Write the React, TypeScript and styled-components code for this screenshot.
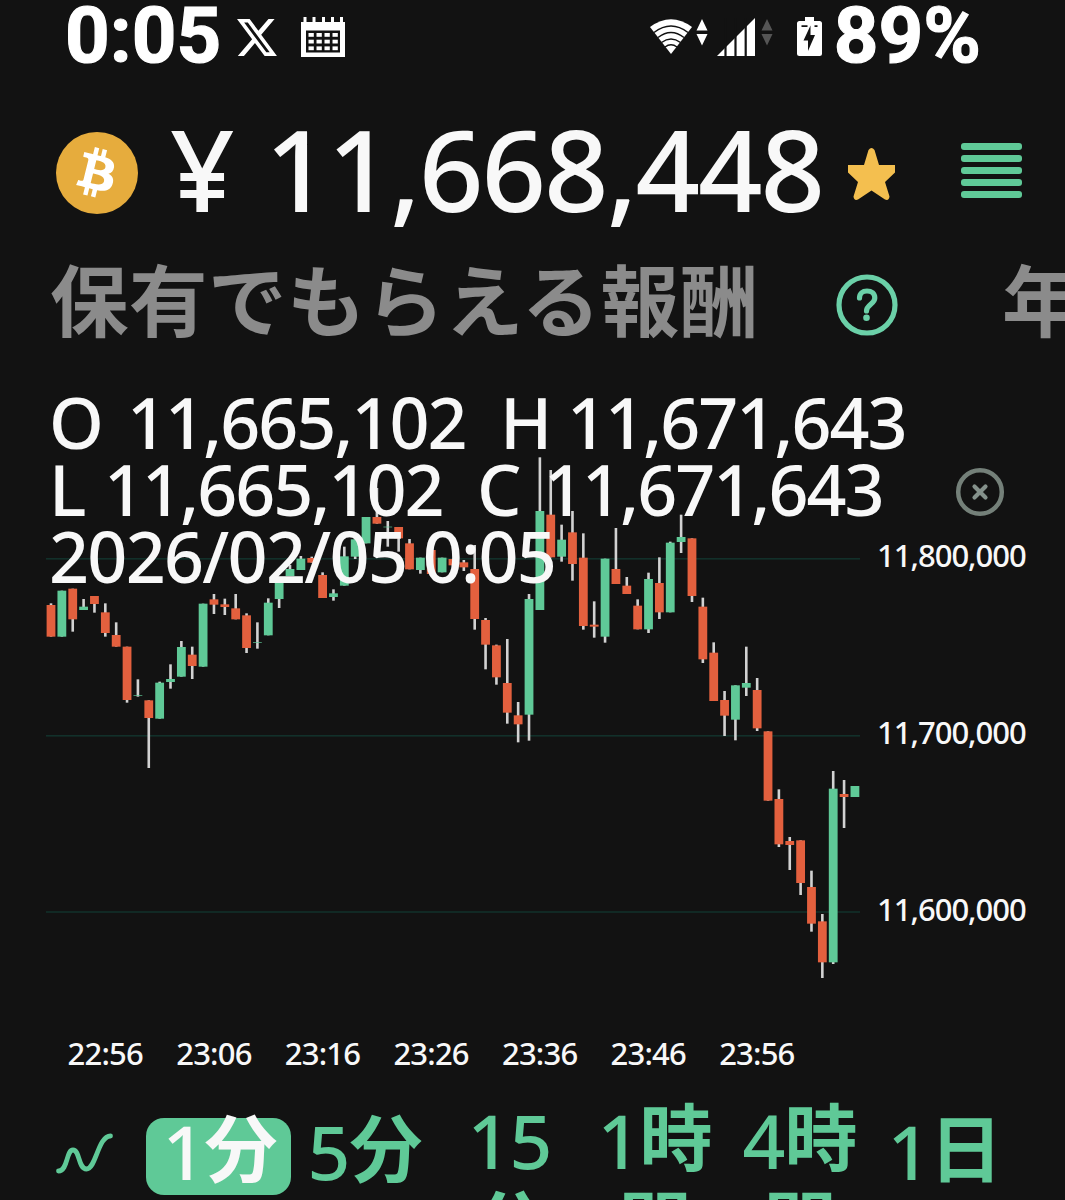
import React from "react";
import styled, { createGlobalStyle } from "styled-components";
import { FaBitcoin } from "react-icons/fa";

const color = {
  bg: "#121212",
  text: "#f8f8f8",
  green: "#5fc997",
  mint: "#6bd0a8",
  red: "#e3603e",
  wick: "#d2d2d2",
  grid: "#12302a",
  muted: "#8b8b8b",
  gold: "#e6ac3d",
  star: "#f4bf4f",
};

const GlobalStyle = createGlobalStyle`
  html, body { margin: 0; background: ${color.bg}; overflow: hidden; }
  * { box-sizing: border-box; }
`;

const Screen = styled.main`
  width: 1065px;
  height: 1200px;
  overflow: hidden;
  display: flex;
  flex-direction: column;
  background: ${color.bg};
  color: ${color.text};
  font-family: "Noto Sans", "Noto Sans CJK JP", sans-serif;
  font-weight: 500;
  white-space: nowrap;
`;

const StatusBar = styled.header`
  height: 72px;
  flex: none;
  display: flex;
  align-items: center;
  justify-content: space-between;
  padding: 0 84px 0 65px;
`;

const StatusGroup = styled.div`
  display: flex;
  align-items: center;
`;

const StatusText = styled.span<{ $ml?: number }>`
  margin-left: ${(p) => p.$ml ?? 0}px;
  color: #fff;
  font: 700 78px/72px Roboto, sans-serif;
  -webkit-text-stroke: 1.2px #fff;
`;

const Icon = styled.svg<{ $ml?: number; $mt?: number }>`
  display: block;
  flex: none;
  margin-left: ${(p) => p.$ml ?? 0}px;
  margin-top: ${(p) => p.$mt ?? 0}px;
`;

const PriceRow = styled.section`
  height: 112px;
  flex: none;
  margin-top: 40px;
  padding-left: 56px;
  display: flex;
  align-items: center;
`;

const Coin = styled.div`
  width: 82px;
  height: 82px;
  flex: none;
  margin-top: 10px;
  border-radius: 50%;
  background: radial-gradient(#fff 60%, ${color.gold} 61%);
  color: ${color.gold};
  svg { display: block; width: 82px; height: 82px; }
`;

const Price = styled.h1`
  width: 678px;
  flex: none;
  margin: 0 0 0 32px;
  font-size: 113px;
  line-height: 112px;
  font-weight: 500;
  letter-spacing: -2.05px;
  word-spacing: 5px;
`;

const Menu = styled.div`
  display: flex;
  flex-direction: column;
  justify-content: space-between;
  width: 61px;
  height: 55px;
  margin: 4px 0 0 66px;
`;

const MenuLine = styled.i`
  height: 7px;
  border-radius: 3px;
  background: ${color.green};
`;

const RewardRow = styled.section`
  height: 90px;
  flex: none;
  margin-top: 28px;
  padding-left: 50px;
  display: flex;
  align-items: center;
  color: ${color.muted};
  font: 700 78.5px/90px "Noto Sans CJK JP", sans-serif;
`;

const RewardLabel = styled.span`
  width: 786px;
  flex: none;
  letter-spacing: 0.5px;
`;

const RateLabel = styled.span`
  margin-left: 104px;
`;

const ChartSection = styled.section`
  position: relative;
  height: 632px;
  flex: none;
  margin-top: 38px;
  display: flex;
`;

const Plot = styled.svg`
  display: block;
  flex: none;
`;

const PriceAxis = styled.div`
  display: flex;
  flex-direction: column;
  padding-top: 87px;
  margin-left: -1px;
  font-size: 31px;
  line-height: 176.8px;
  letter-spacing: -1px;
`;

const Readout = styled.div`
  position: absolute;
  left: 49px;
  top: 9px;
  font-size: 70px;
  line-height: 67px;
`;

const ReadoutLine = styled.div<{ $ls?: number }>`
  display: flex;
  letter-spacing: ${(p) => p.$ls ?? -2}px;
`;

const Field = styled.span<{ $w: number }>`
  display: block;
  width: ${(p) => p.$w}px;
  flex: none;
`;

const Dismiss = styled.svg`
  position: absolute;
  left: 955px;
  top: 87px;
`;

const TimeAxis = styled.div`
  height: 40px;
  flex: none;
  margin-top: 21px;
  padding-left: 51px;
  display: flex;
  font-size: 31px;
  line-height: 40px;
  letter-spacing: -0.8px;
`;

const TimeLabel = styled.span`
  width: 108.6px;
  text-align: center;
`;

const Tabs = styled.nav`
  height: 127px;
  flex: none;
  padding-left: 56px;
  margin-top: 26px;
  display: flex;
  align-items: flex-start;
  color: ${color.green};
`;

const Tab = styled.button<{ $active?: boolean; $double?: boolean }>`
  width: 145px;
  height: ${(p) => (p.$double ? 164 : 77)}px;
  flex: none;
  display: flex;
  flex-direction: column;
  align-items: center;
  margin: ${(p) => (p.$double ? 0 : 19)}px 0 0;
  padding: 0;
  border: 0;
  border-radius: 18px;
  background: ${(p) => (p.$active ? color.green : "transparent")};
  color: ${(p) => (p.$active ? color.text : color.green)};
  font: 500 75px/82px "Noto Sans", "Noto Sans CJK JP", sans-serif;
  letter-spacing: -1px;
`;

const TabLine = styled.span<{ $up?: boolean }>`
  display: flex;
  height: 82px;
  padding-left: 2px;
  margin-top: ${(p) => (p.$up ? -8 : 0)}px;
`;

const Kanji = styled.span<{ $drop?: boolean }>`
  margin-top: ${(p) => (p.$drop ? 0 : -5)}px;
  font: 700 73px/79px "Noto Sans CJK JP", sans-serif;
`;

/* kind, body top, body bottom, wick top, wick bottom; three units per pixel */
type Candle = [0 | 1, number, number, number, number];
const candles: Candle[] = [
  [0, 675, 770, 670, 770], [1, 632, 770, 632, 770], [0, 626, 718, 626, 755], [1, 680, 690, 657, 690],
  [0, 648, 672, 648, 698], [0, 697, 759, 670, 770], [0, 765, 800, 727, 800], [0, 800, 960, 800, 968],
  [1, 946, 948, 898, 950], [0, 961, 1014, 961, 1164], [1, 908, 1016, 905, 1016], [1, 897, 906, 853, 926],
  [1, 801, 890, 783, 890], [0, 824, 858, 800, 897], [1, 671, 860, 671, 860], [0, 658, 674, 642, 702],
  [0, 673, 681, 656, 705], [0, 685, 718, 642, 718], [0, 706, 804, 700, 819], [1, 786, 788, 727, 806],
  [1, 668, 766, 655, 766], [1, 595, 657, 595, 684], [1, 567, 588, 555, 588], [1, 536, 570, 528, 570],
  [0, 534, 548, 530, 548], [0, 585, 654, 577, 654], [1, 640, 651, 628, 662], [1, 529, 617, 500, 617],
  [1, 478, 530, 478, 537], [1, 411, 490, 411, 490], [0, 411, 431, 324, 431], [1, 440, 442, 423, 500],
  [0, 441, 475, 441, 515], [0, 490, 568, 477, 568], [1, 533, 570, 533, 581], [0, 510, 582, 510, 582],
  [1, 533, 577, 533, 577], [0, 537, 556, 537, 556], [0, 547, 562, 540, 573], [0, 567, 717, 495, 749],
  [0, 720, 794, 714, 868], [0, 796, 892, 794, 914], [0, 909, 998, 777, 1031], [0, 1006, 1033, 966, 1087],
  [1, 657, 1004, 642, 1082], [1, 393, 690, 232, 690], [0, 404, 532, 270, 532], [1, 479, 530, 434, 545],
  [0, 457, 552, 393, 602], [0, 533, 738, 460, 749], [0, 734, 740, 664, 773], [1, 536, 770, 536, 788],
  [0, 567, 612, 444, 612], [0, 617, 642, 591, 642], [0, 677, 748, 658, 748], [1, 597, 748, 578, 759],
  [0, 609, 697, 532, 717], [1, 488, 697, 485, 697], [1, 471, 486, 404, 519], [0, 475, 648, 475, 666],
  [0, 680, 838, 653, 849], [0, 818, 963, 787, 963], [0, 960, 1007, 933, 1068], [1, 916, 1019, 916, 1081],
  [1, 909, 923, 800, 948], [0, 930, 1045, 894, 1053], [0, 1054, 1262, 1054, 1262], [0, 1257, 1393, 1228, 1401],
  [0, 1383, 1395, 1371, 1470], [0, 1381, 1509, 1381, 1545], [0, 1521, 1631, 1472, 1655], [0, 1624, 1747, 1602, 1794],
  [1, 1226, 1747, 1173, 1752], [0, 1242, 1251, 1200, 1344], [1, 1218, 1251, 1218, 1251],
];

const times = ["22:56", "23:06", "23:16", "23:26", "23:36", "23:46", "23:56"];
const levels = ["11,800,000", "11,700,000", "11,600,000"];

function Chart() {
  return (
    <Plot width="878" height="632" viewBox="0 0 878 632">
      {[178.8, 355.8, 532].map((y) => (
        <rect key={y} x="46" y={y - 0.8} width="814" height="1.6" fill={color.grid} />
      ))}
      {candles.map(([up, top, bottom, high, low], i) => {
        const x = 51 + i * 10.864;
        return (
          <g key={i}>
            <rect x={x - 1.3} y={high / 3} width="2.6" height={(low - high) / 3} fill={color.wick} />
            <rect x={x - 4.4} y={top / 3} width="8.8" height={(bottom - top) / 3} fill={up ? color.green : color.red} />
          </g>
        );
      })}
    </Plot>
  );
}

function XLogo() {
  return (
    <Icon $ml={16} $mt={2} width="40" height="37" viewBox="1.25 2.25 21.6 19.5" preserveAspectRatio="none" fill="#fff">
      <path d="M18.244 2.25h3.308l-7.227 8.26 8.502 11.24H16.17l-5.214-6.817L4.99 21.75H1.68l7.73-8.835L1.254 2.25H8.08l4.713 6.231zm-1.161 17.52h1.833L7.084 4.126H5.117z" />
    </Icon>
  );
}

function CalendarIcon() {
  return (
    <Icon $ml={24} $mt={2} width="44" height="40" viewBox="0 0 44 40">
      <path fill="#fff" d="M0 5h44v35H0z" />
      {[2.5, 11.5, 21, 30, 39].map((x) => (
        <rect key={x} x={x} y="0" width="3" height="6" fill="#fff" />
      ))}
      <path fill={color.bg} d="M5 13.5h34v22H5z" />
      {[0, 1, 2].map((r) =>
        [0, 1, 2, 3].map((c) => (
          <rect key={`${r}-${c}`} x={7.5 + c * 8} y={16 + r * 6.7} width="5.3" height="3.8" fill="#fff" />
        ))
      )}
    </Icon>
  );
}

function WifiIcon() {
  return (
    <Icon $mt={1} width="42" height="35" viewBox="0 0 42 35">
      <path fill="#fff" d="M0 8Q21 -7.5 42 8L21 35Z" />
      <g fill="none" stroke={color.bg} strokeWidth="1.5">
        <path d="M4 13.5Q21 .5 38 13.5M8 18.5Q21 8.5 34 18.5M11.5 23.5Q21 16.5 30.5 23.5M15 28Q21 23.5 27 28" />
      </g>
    </Icon>
  );
}

function Arrows({ fill, ml }: { fill: string; ml: number }) {
  return (
    <Icon $ml={ml} $mt={-7} width="12" height="27" viewBox="0 0 12 27" fill={fill}>
      <path d="M6 0l5.5 11.5H.5zM.5 15h11L6 26.5z" />
    </Icon>
  );
}

function SignalIcon() {
  return (
    <Icon $ml={9} $mt={1} width="38" height="38" viewBox="0 0 38 38">
      <path fill="#fff" d="M0 38L38 0v38z" />
      <path stroke={color.bg} strokeWidth="2.2" d="M8.5 0v38M18.5 0v38M28.7 0v38" />
    </Icon>
  );
}

function BatteryIcon() {
  return (
    <Icon $ml={24} $mt={1} width="25" height="39" viewBox="0 0 25 39">
      <path fill="#fff" d="M8 0h9v4h5.500a2.500 2.500 0 0 1 2.500 2.500V36.500a2.500 2.500 0 0 1-2.500 2.500H2.500a2.500 2.500 0 0 1-2.500-2.500V6.500A2.500 2.500 0 0 1 2.500 4H8z" />
      <path fill={color.bg} d="M13.500 8.500L6.500 23.500h4.500v10.500l7-16h-4.500zM4.500 8.300h6v1.800h-6zM17.500 8.300h3v1.800h-3z" />
    </Icon>
  );
}

export default function App() {
  return (
    <Screen>
      <GlobalStyle />
      <StatusBar>
        <StatusGroup>
          <StatusText>0:05</StatusText>
          <XLogo />
          <CalendarIcon />
        </StatusGroup>
        <StatusGroup>
          <WifiIcon />
          <Arrows fill="#fff" ml={4} />
          <SignalIcon />
          <Arrows fill="#555" ml={6} />
          <BatteryIcon />
          <StatusText $ml={12}>89%</StatusText>
        </StatusGroup>
      </StatusBar>

      <PriceRow>
        <Coin><FaBitcoin /></Coin>
        <Price>¥ 11,668,448</Price>
        <Icon $mt={11} width="47" height="52" viewBox="0 0 47 52">
          <path
            fill={color.star}
            d="M20.500 2Q23.500-2 26.500 2L31 17H47V24.500L37 34 41.500 48.500Q41 53 37 51.500L23.500 42.500 10 51.500Q6 53 5.500 48.500L10 34 0 24.500V17H16Z"
          />
        </Icon>
        <Menu>
          {[0, 1, 2, 3, 4].map((n) => <MenuLine key={n} />)}
        </Menu>
      </PriceRow>

      <RewardRow>
        <RewardLabel>保有でもらえる報酬</RewardLabel>
        <Icon $mt={16} width="62" height="62" viewBox="0 0 62 62" fill="none" stroke={color.mint} strokeWidth="5.200">
          <circle cx="31" cy="31" r="28" />
          <path d="M23.500 24c0-4.500 3-7 7.500-7s7.800 2.500 7.800 7c0 6-8.300 6.500-8.300 13" strokeLinecap="round" />
          <circle cx="30.500" cy="43.800" r="3.300" fill={color.mint} stroke="none" />
        </Icon>
        <RateLabel>年率</RateLabel>
      </RewardRow>

      <ChartSection>
        <Chart />
        <PriceAxis>
          {levels.map((l) => <span key={l}>{l}</span>)}
        </PriceAxis>
        <Readout>
          <ReadoutLine>
            <Field $w={78}>O</Field>
            <Field $w={373}>11,665,102</Field>
            <Field $w={67}>H</Field>
            <Field $w={345}>11,671,643</Field>
          </ReadoutLine>
          <ReadoutLine>
            <Field $w={55}>L</Field>
            <Field $w={373}>11,665,102</Field>
            <Field $w={67}>C</Field>
            <Field $w={345}>11,671,643</Field>
          </ReadoutLine>
          <ReadoutLine $ls={-1.7}>2026/02/05 0:05</ReadoutLine>
        </Readout>
        <Dismiss width="50" height="50" viewBox="0 0 50 50" fill="none" stroke="#748079" strokeWidth="4.500">
          <circle cx="25" cy="25" r="21.800" />
          <path d="M19.500 19.500l11 11M30.500 19.500l-11 11" strokeLinecap="round" strokeWidth="4.200" stroke="#84918b" />
        </Dismiss>
      </ChartSection>

      <TimeAxis>
        {times.map((t) => <TimeLabel key={t}>{t}</TimeLabel>)}
      </TimeAxis>

      <Tabs>
        <Icon $mt={33} width="90" height="44" viewBox="0 0 90 44" fill="none" stroke={color.green} strokeWidth="4.800" strokeLinecap="round">
          <path d="M2.500 39C12 39 10 18 17 18S22 37 30.500 37C40 37 42 4 54.500 4" />
        </Icon>
        <Tab $active><TabLine $up>1<Kanji>分</Kanji></TabLine></Tab>
        <Tab><TabLine $up>5<Kanji>分</Kanji></TabLine></Tab>
        <Tab $double><TabLine>15</TabLine><TabLine><Kanji $drop>分</Kanji></TabLine></Tab>
        <Tab $double><TabLine>1<Kanji>時</Kanji></TabLine><TabLine><Kanji $drop>間</Kanji></TabLine></Tab>
        <Tab $double><TabLine>4<Kanji>時</Kanji></TabLine><TabLine><Kanji $drop>間</Kanji></TabLine></Tab>
        <Tab><TabLine $up>1<Kanji>日</Kanji></TabLine></Tab>
      </Tabs>
    </Screen>
  );
}
